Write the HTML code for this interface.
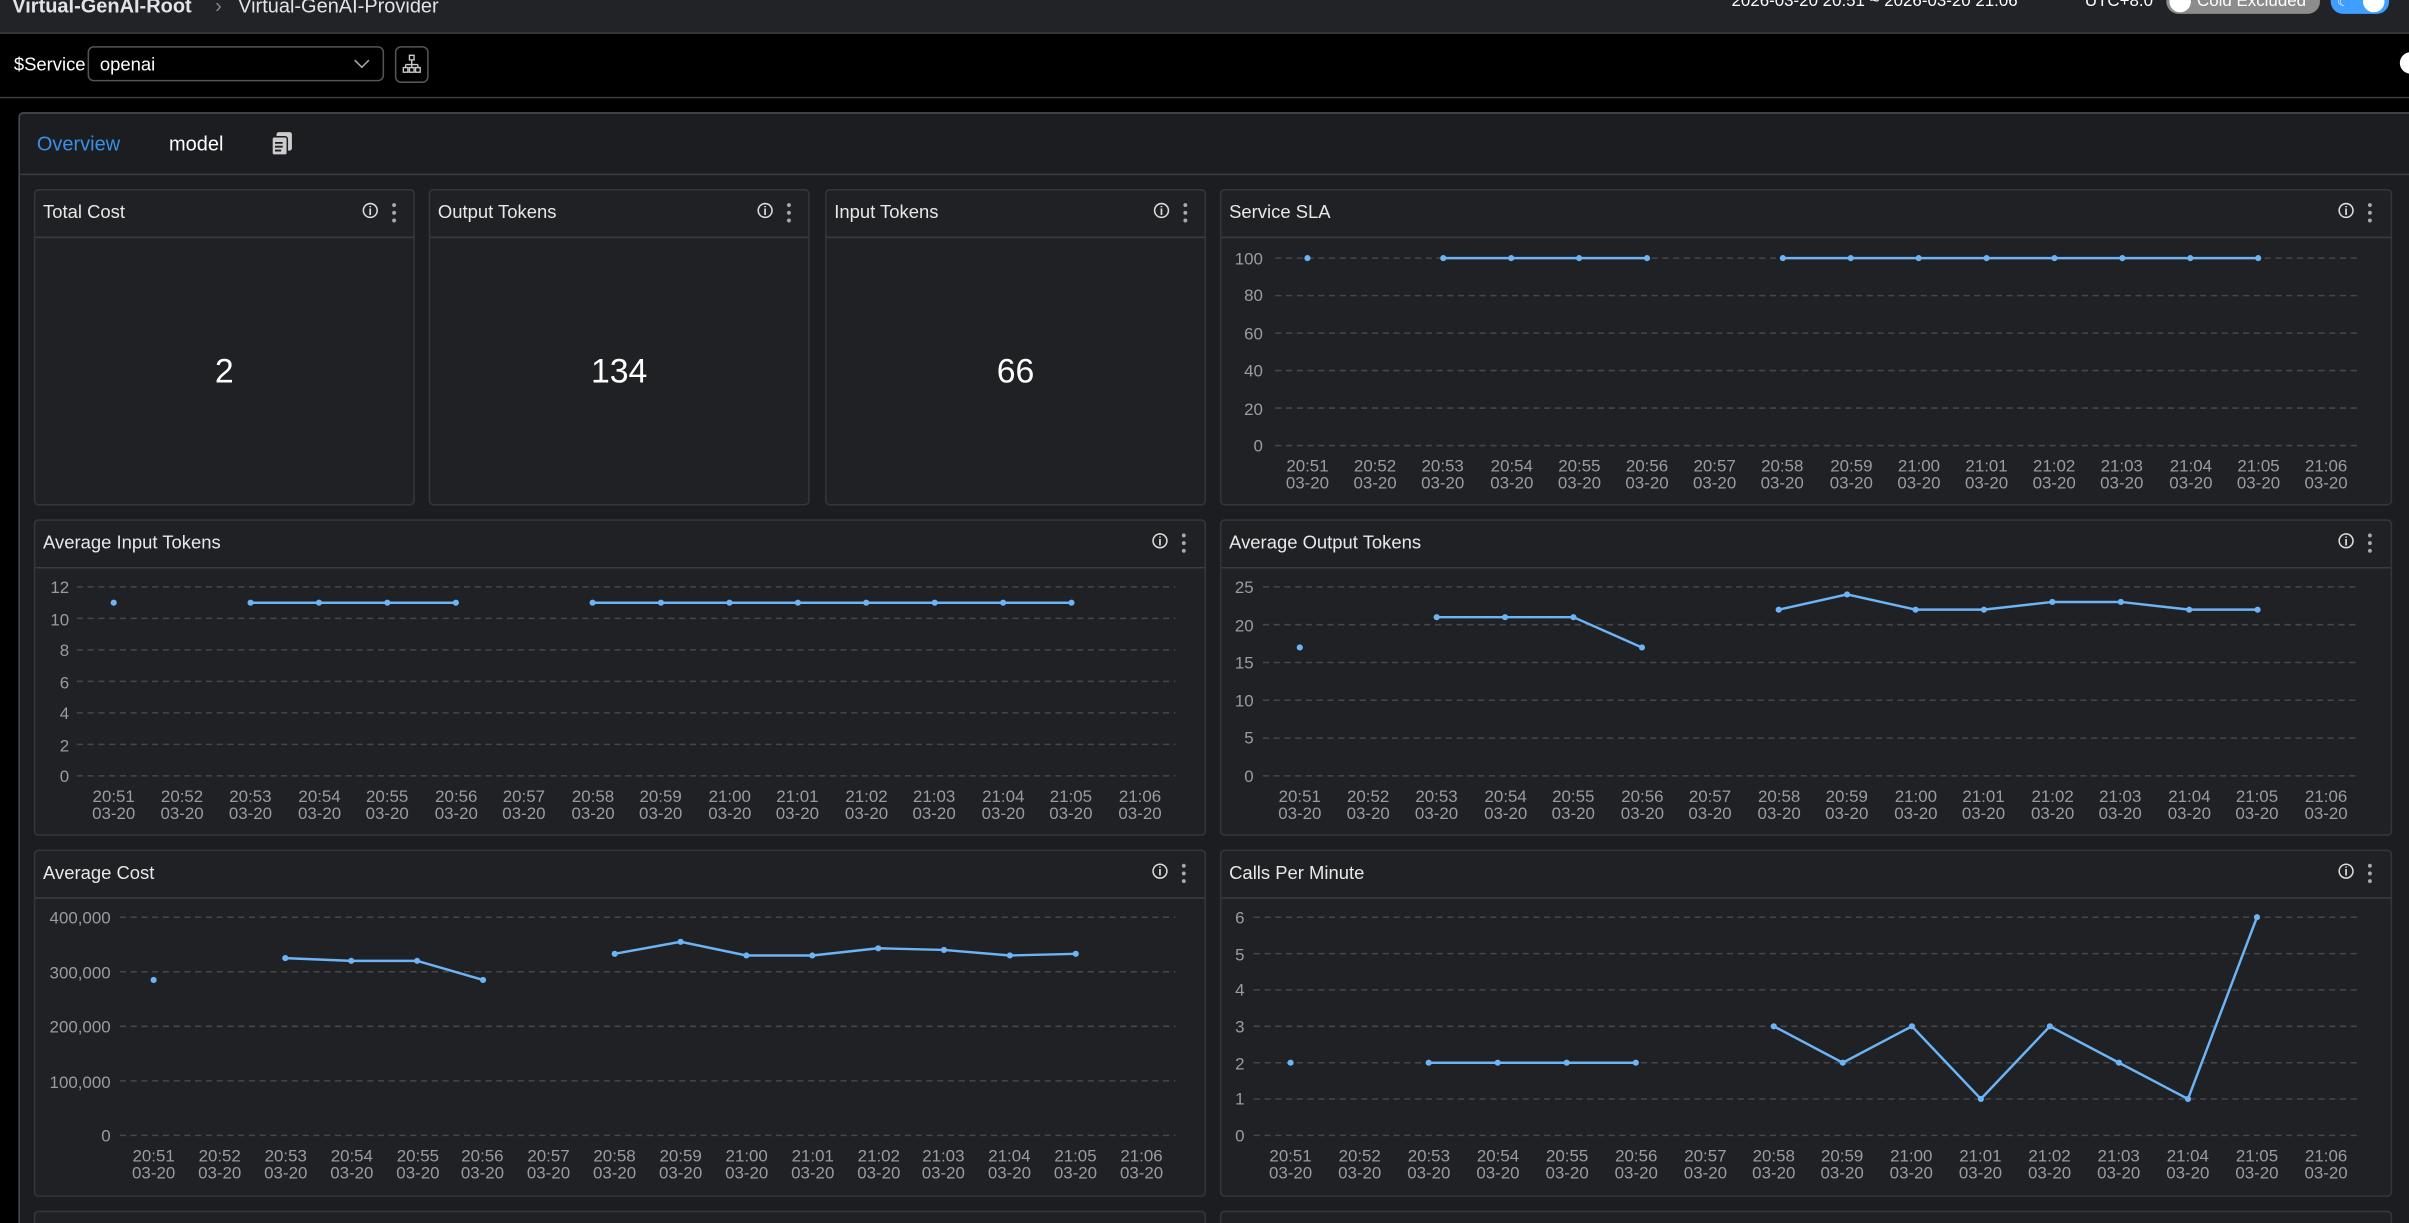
<!DOCTYPE html>
<html><head><meta charset="utf-8"><style>
html,body{margin:0;padding:0;width:2409px;height:1222px;overflow:hidden;background:#000;font-family:"Liberation Sans",sans-serif;}
#w{position:absolute;left:0;top:0;width:1568px;height:796px;transform:scale(1.5364);transform-origin:0 0;background:#000;overflow:hidden}
.a{position:absolute}
.card{position:absolute;background:#202125;border:1px solid #34363b;border-radius:3px;box-sizing:border-box}
.card .h{height:30px;border-bottom:1px solid #3a3c41;color:#e8e8e8;font-size:12px;line-height:28px;padding-left:5px;position:relative}
.ic{position:absolute;top:8px;width:10px;height:10px;border:1px solid #ddd;border-radius:50%;box-sizing:border-box;font-size:8px;line-height:9px;text-align:center;color:#ddd;font-weight:bold}
.dots{position:absolute;top:7px;width:3px;height:14px;background:radial-gradient(circle,#aaa 1.2px,transparent 1.4px) 0 0/3px 5px repeat-y}
.big{position:absolute;left:0;right:0;top:105px;text-align:center;color:#fff;font-size:22px}
svg text{font-family:"Liberation Sans",sans-serif;font-size:11px;fill:#9a9ca2}
</style></head><body><div id="w">
<div class="a" style="left:0;top:0;width:1568px;height:21px;background:#222327;border-bottom:1px solid #3b3c40"></div>
<div class="a" style="left:8px;top:-4px;font-size:13px;color:#dfe3ea;font-weight:bold">Virtual-GenAI-Root</div>
<div class="a" style="left:140px;top:-4px;font-size:13px;color:#888">›</div>
<div class="a" style="left:155px;top:-4px;font-size:13px;color:#dfe3ea">Virtual-GenAI-Provider</div>
<div class="a" style="left:1127px;top:-5px;font-size:11px;color:#fff">2026-03-20 20:51 ~ 2026-03-20 21:06</div>
<div class="a" style="left:1357px;top:-5px;font-size:11px;color:#fff">UTC+8.0</div>
<div class="a" style="left:1410px;top:-8px;width:100px;height:17px;border-radius:8px;background:#8c8c8c"></div>
<div class="a" style="left:1412px;top:-6px;width:14px;height:14px;border-radius:50%;background:#fff"></div>
<div class="a" style="left:1430px;top:-5px;font-size:11px;color:#fff">Cold Excluded</div>
<div class="a" style="left:1517px;top:-8px;width:38px;height:17px;border-radius:8px;background:#409eff"></div>
<div class="a" style="left:1538px;top:-6px;width:14px;height:14px;border-radius:50%;background:#fff"></div>
<div class="a" style="left:1521px;top:-4px;font-size:9px;color:#fff">☾</div>
<div class="a" style="left:1562px;top:34px;width:14px;height:14px;border-radius:50%;background:#fff"></div>
<div class="a" style="left:0;top:63px;width:1568px;height:1px;background:#3b3c40"></div>
<div class="a" style="left:9px;top:35px;font-size:12px;color:#fff">$Service</div>
<div class="a" style="left:57px;top:30px;width:193px;height:23px;border:1px solid #555;border-radius:4px;box-sizing:border-box"></div>
<div class="a" style="left:65px;top:35px;font-size:12px;color:#fff">openai</div>
<div class="a" style="left:232px;top:36px;width:6px;height:6px;border-right:1px solid #aaa;border-bottom:1px solid #aaa;transform:rotate(45deg)"></div>
<div class="a" style="left:257px;top:30px;width:22px;height:24px;border:1px solid #555;border-radius:4px;box-sizing:border-box"></div>
<svg class="a" style="left:262px;top:35px" width="12" height="14" viewBox="0 0 12 14"><g fill="none" stroke="#ccc" stroke-width="0.9"><rect x="4.5" y="1" width="3" height="3"/><path d="M6 4v3M2 7h8M2 7v2M6 7v2M10 7v2"/><rect x="0.5" y="9" width="3" height="3"/><rect x="4.5" y="9" width="3" height="3"/><rect x="8.5" y="9" width="3" height="3"/></g></svg>
<div class="a" style="left:12px;top:73px;width:1580px;height:740px;background:#1c1d21;border:1px solid #4a4b50;border-radius:3px"></div>
<div class="a" style="left:12px;top:113px;width:1556px;height:1px;background:#3b3c40"></div>
<div class="a" style="left:24px;top:86px;font-size:13px;color:#3a8ee6">Overview</div>
<div class="a" style="left:110px;top:86px;font-size:13px;color:#fff">model</div>
<svg class="a" style="left:176px;top:85px" width="15" height="17" viewBox="0 0 15 17"><rect x="4" y="1" width="10" height="12" rx="1.5" fill="#ccc"/><rect x="1" y="4" width="10" height="12" rx="1.5" fill="#ccc" stroke="#1c1d21" stroke-width="1"/><path d="M3 8h5M3 10.5h5M3 13h4" stroke="#1c1d21" stroke-width="1.2"/></svg>

<div class="card" style="left:22px;top:123px;width:248px;height:206px"><div class="h">Total Cost<span class="ic" style="left:213px">i</span><span class="dots" style="left:232px"></span></div><div class="big">2</div></div>
<div class="card" style="left:279px;top:123px;width:248px;height:206px"><div class="h">Output Tokens<span class="ic" style="left:213px">i</span><span class="dots" style="left:232px"></span></div><div class="big">134</div></div>
<div class="card" style="left:537px;top:123px;width:248px;height:206px"><div class="h">Input Tokens<span class="ic" style="left:213px">i</span><span class="dots" style="left:232px"></span></div><div class="big">66</div></div>
<div class="card" style="left:794px;top:123px;width:763px;height:206px"><div class="h">Service SLA<span class="ic" style="left:727px">i</span><span class="dots" style="left:746px"></span></div></div>
<div class="card" style="left:22px;top:338px;width:763px;height:206px"><div class="h">Average Input Tokens<span class="ic" style="left:727px">i</span><span class="dots" style="left:746px"></span></div></div>
<div class="card" style="left:794px;top:338px;width:763px;height:206px"><div class="h">Average Output Tokens<span class="ic" style="left:727px">i</span><span class="dots" style="left:746px"></span></div></div>
<div class="card" style="left:22px;top:553px;width:763px;height:226px"><div class="h">Average Cost<span class="ic" style="left:727px">i</span><span class="dots" style="left:746px"></span></div></div>
<div class="card" style="left:794px;top:553px;width:763px;height:226px"><div class="h">Calls Per Minute<span class="ic" style="left:727px">i</span><span class="dots" style="left:746px"></span></div></div>
<div class="card" style="left:22px;top:788px;width:763px;height:30px"></div>
<div class="card" style="left:794px;top:788px;width:763px;height:30px"></div>

<svg class="a" style="left:0;top:0" width="1568" height="796">
<g stroke="#45474c" stroke-dasharray="4 3" stroke-width="1">
<path d="M830 168H1535M830 192.4H1535M830 216.8H1535M830 241.2H1535M830 265.6H1535M830 290H1535"/>
<path d="M50 382H765M50 402.5H765M50 423H765M50 443.5H765M50 464H765M50 484.5H765M50 505H765"/>
<path d="M822 382H1535M822 406.6H1535M822 431.2H1535M822 455.8H1535M822 480.4H1535M822 505H1535"/>
<path d="M78 597H765M78 632.5H765M78 668H765M78 703.5H765M78 739H765"/>
<path d="M816 597H1535M816 620.7H1535M816 644.3H1535M816 668H1535M816 691.7H1535M816 715.3H1535M816 739H1535"/>
</g>
<g text-anchor="end">
<text x="822" y="172">100</text><text x="822" y="196">80</text><text x="822" y="221">60</text><text x="822" y="245">40</text><text x="822" y="270">20</text><text x="822" y="294">0</text>
<text x="45" y="386">12</text><text x="45" y="407">10</text><text x="45" y="427">8</text><text x="45" y="448">6</text><text x="45" y="468">4</text><text x="45" y="489">2</text><text x="45" y="509">0</text>
<text x="816" y="386">25</text><text x="816" y="411">20</text><text x="816" y="435">15</text><text x="816" y="460">10</text><text x="816" y="484">5</text><text x="816" y="509">0</text>
<text x="72" y="601">400,000</text><text x="72" y="637">300,000</text><text x="72" y="672">200,000</text><text x="72" y="708">100,000</text><text x="72" y="743">0</text>
<text x="810" y="601">6</text><text x="810" y="625">5</text><text x="810" y="648">4</text><text x="810" y="672">3</text><text x="810" y="696">2</text><text x="810" y="719">1</text><text x="810" y="743">0</text>
</g>
<g text-anchor="middle">
<g id="sl"><text x="851" y="307">20:51</text><text x="895" y="307">20:52</text><text x="939" y="307">20:53</text><text x="984" y="307">20:54</text><text x="1028" y="307">20:55</text><text x="1072" y="307">20:56</text><text x="1116" y="307">20:57</text><text x="1160" y="307">20:58</text><text x="1205" y="307">20:59</text><text x="1249" y="307">21:00</text><text x="1293" y="307">21:01</text><text x="1337" y="307">21:02</text><text x="1381" y="307">21:03</text><text x="1426" y="307">21:04</text><text x="1470" y="307">21:05</text><text x="1514" y="307">21:06</text>
<text x="851" y="318">03-20</text><text x="895" y="318">03-20</text><text x="939" y="318">03-20</text><text x="984" y="318">03-20</text><text x="1028" y="318">03-20</text><text x="1072" y="318">03-20</text><text x="1116" y="318">03-20</text><text x="1160" y="318">03-20</text><text x="1205" y="318">03-20</text><text x="1249" y="318">03-20</text><text x="1293" y="318">03-20</text><text x="1337" y="318">03-20</text><text x="1381" y="318">03-20</text><text x="1426" y="318">03-20</text><text x="1470" y="318">03-20</text><text x="1514" y="318">03-20</text></g>
<text x="74" y="522">20:51</text><text x="118.5" y="522">20:52</text><text x="163" y="522">20:53</text><text x="208" y="522">20:54</text><text x="252" y="522">20:55</text><text x="297" y="522">20:56</text><text x="341" y="522">20:57</text><text x="386" y="522">20:58</text><text x="430" y="522">20:59</text><text x="475" y="522">21:00</text><text x="519" y="522">21:01</text><text x="564" y="522">21:02</text><text x="608" y="522">21:03</text><text x="653" y="522">21:04</text><text x="697" y="522">21:05</text><text x="742" y="522">21:06</text>
<text x="74" y="533">03-20</text><text x="118.5" y="533">03-20</text><text x="163" y="533">03-20</text><text x="208" y="533">03-20</text><text x="252" y="533">03-20</text><text x="297" y="533">03-20</text><text x="341" y="533">03-20</text><text x="386" y="533">03-20</text><text x="430" y="533">03-20</text><text x="475" y="533">03-20</text><text x="519" y="533">03-20</text><text x="564" y="533">03-20</text><text x="608" y="533">03-20</text><text x="653" y="533">03-20</text><text x="697" y="533">03-20</text><text x="742" y="533">03-20</text>
<text x="846" y="522">20:51</text><text x="890.5" y="522">20:52</text><text x="935" y="522">20:53</text><text x="980" y="522">20:54</text><text x="1024" y="522">20:55</text><text x="1069" y="522">20:56</text><text x="1113" y="522">20:57</text><text x="1158" y="522">20:58</text><text x="1202" y="522">20:59</text><text x="1247" y="522">21:00</text><text x="1291" y="522">21:01</text><text x="1336" y="522">21:02</text><text x="1380" y="522">21:03</text><text x="1425" y="522">21:04</text><text x="1469" y="522">21:05</text><text x="1514" y="522">21:06</text>
<text x="846" y="533">03-20</text><text x="890.5" y="533">03-20</text><text x="935" y="533">03-20</text><text x="980" y="533">03-20</text><text x="1024" y="533">03-20</text><text x="1069" y="533">03-20</text><text x="1113" y="533">03-20</text><text x="1158" y="533">03-20</text><text x="1202" y="533">03-20</text><text x="1247" y="533">03-20</text><text x="1291" y="533">03-20</text><text x="1336" y="533">03-20</text><text x="1380" y="533">03-20</text><text x="1425" y="533">03-20</text><text x="1469" y="533">03-20</text><text x="1514" y="533">03-20</text>
<text x="100" y="756">20:51</text><text x="143" y="756">20:52</text><text x="186" y="756">20:53</text><text x="229" y="756">20:54</text><text x="272" y="756">20:55</text><text x="314" y="756">20:56</text><text x="357" y="756">20:57</text><text x="400" y="756">20:58</text><text x="443" y="756">20:59</text><text x="486" y="756">21:00</text><text x="529" y="756">21:01</text><text x="572" y="756">21:02</text><text x="614" y="756">21:03</text><text x="657" y="756">21:04</text><text x="700" y="756">21:05</text><text x="743" y="756">21:06</text>
<text x="100" y="767">03-20</text><text x="143" y="767">03-20</text><text x="186" y="767">03-20</text><text x="229" y="767">03-20</text><text x="272" y="767">03-20</text><text x="314" y="767">03-20</text><text x="357" y="767">03-20</text><text x="400" y="767">03-20</text><text x="443" y="767">03-20</text><text x="486" y="767">03-20</text><text x="529" y="767">03-20</text><text x="572" y="767">03-20</text><text x="614" y="767">03-20</text><text x="657" y="767">03-20</text><text x="700" y="767">03-20</text><text x="743" y="767">03-20</text>
<text x="840" y="756">20:51</text><text x="885" y="756">20:52</text><text x="930" y="756">20:53</text><text x="975" y="756">20:54</text><text x="1020" y="756">20:55</text><text x="1065" y="756">20:56</text><text x="1110" y="756">20:57</text><text x="1154.5" y="756">20:58</text><text x="1199" y="756">20:59</text><text x="1244" y="756">21:00</text><text x="1289" y="756">21:01</text><text x="1334" y="756">21:02</text><text x="1379" y="756">21:03</text><text x="1424" y="756">21:04</text><text x="1469" y="756">21:05</text><text x="1514" y="756">21:06</text>
<text x="840" y="767">03-20</text><text x="885" y="767">03-20</text><text x="930" y="767">03-20</text><text x="975" y="767">03-20</text><text x="1020" y="767">03-20</text><text x="1065" y="767">03-20</text><text x="1110" y="767">03-20</text><text x="1154.5" y="767">03-20</text><text x="1199" y="767">03-20</text><text x="1244" y="767">03-20</text><text x="1289" y="767">03-20</text><text x="1334" y="767">03-20</text><text x="1379" y="767">03-20</text><text x="1424" y="767">03-20</text><text x="1469" y="767">03-20</text><text x="1514" y="767">03-20</text>
</g>
<g fill="none" stroke="#6cb4f5" stroke-width="1.6">
<path d="M939.4 168H1072M1160.4 168H1469.8"/>
<path d="M163.1 392.3H296.7M385.7 392.3H697.4"/>
<path d="M935.1 401.7L979.6 401.7L1024.1 401.7L1068.7 421.4M1157.7 396.8L1202.2 386.9L1246.8 396.8L1291.3 396.8L1335.8 391.8L1380.4 391.8L1424.9 396.8L1469.4 396.8"/>
<path d="M185.7 623.6L228.6 625.4L271.5 625.4L314.4 637.8M400.1 620.8L443 613L485.8 621.9L528.7 621.9L571.6 617.2L614.4 618.3L657.3 621.9L700.2 620.8"/>
<path d="M929.9 691.7L1064.7 691.7M1154.5 668L1199.4 691.7L1244.4 668L1289.3 715.3L1334.2 668L1379.2 691.7L1424.1 715.3L1469 597"/>
</g>
<g fill="#6cb4f5">
<circle cx="851" cy="168" r="2"/><circle cx="939.4" cy="168" r="2"/><circle cx="983.6" cy="168" r="2"/><circle cx="1027.8" cy="168" r="2"/><circle cx="1072" cy="168" r="2"/><circle cx="1160.4" cy="168" r="2"/><circle cx="1204.6" cy="168" r="2"/><circle cx="1248.8" cy="168" r="2"/><circle cx="1293" cy="168" r="2"/><circle cx="1337.2" cy="168" r="2"/><circle cx="1381.4" cy="168" r="2"/><circle cx="1425.6" cy="168" r="2"/><circle cx="1469.8" cy="168" r="2"/>
<circle cx="74" cy="392.3" r="2"/><circle cx="163.1" cy="392.3" r="2"/><circle cx="207.6" cy="392.3" r="2"/><circle cx="252.1" cy="392.3" r="2"/><circle cx="296.7" cy="392.3" r="2"/><circle cx="385.7" cy="392.3" r="2"/><circle cx="430.2" cy="392.3" r="2"/><circle cx="474.8" cy="392.3" r="2"/><circle cx="519.3" cy="392.3" r="2"/><circle cx="563.8" cy="392.3" r="2"/><circle cx="608.4" cy="392.3" r="2"/><circle cx="652.9" cy="392.3" r="2"/><circle cx="697.4" cy="392.3" r="2"/>
<circle cx="846" cy="421.4" r="2"/><circle cx="935.1" cy="401.7" r="2"/><circle cx="979.6" cy="401.7" r="2"/><circle cx="1024.1" cy="401.7" r="2"/><circle cx="1068.7" cy="421.4" r="2"/><circle cx="1157.7" cy="396.8" r="2"/><circle cx="1202.2" cy="386.9" r="2"/><circle cx="1246.8" cy="396.8" r="2"/><circle cx="1291.3" cy="396.8" r="2"/><circle cx="1335.8" cy="391.8" r="2"/><circle cx="1380.4" cy="391.8" r="2"/><circle cx="1424.9" cy="396.8" r="2"/><circle cx="1469.4" cy="396.8" r="2"/>
<circle cx="100" cy="637.8" r="2"/><circle cx="185.7" cy="623.6" r="2"/><circle cx="228.6" cy="625.4" r="2"/><circle cx="271.5" cy="625.4" r="2"/><circle cx="314.4" cy="637.8" r="2"/><circle cx="400.1" cy="620.8" r="2"/><circle cx="443" cy="613" r="2"/><circle cx="485.8" cy="621.9" r="2"/><circle cx="528.7" cy="621.9" r="2"/><circle cx="571.6" cy="617.2" r="2"/><circle cx="614.4" cy="618.3" r="2"/><circle cx="657.3" cy="621.9" r="2"/><circle cx="700.2" cy="620.8" r="2"/>
<circle cx="840" cy="691.7" r="2"/><circle cx="929.9" cy="691.7" r="2"/><circle cx="974.8" cy="691.7" r="2"/><circle cx="1019.7" cy="691.7" r="2"/><circle cx="1064.7" cy="691.7" r="2"/><circle cx="1154.5" cy="668" r="2"/><circle cx="1199.4" cy="691.7" r="2"/><circle cx="1244.4" cy="668" r="2"/><circle cx="1289.3" cy="715.3" r="2"/><circle cx="1334.2" cy="668" r="2"/><circle cx="1379.2" cy="691.7" r="2"/><circle cx="1424.1" cy="715.3" r="2"/><circle cx="1469" cy="597" r="2"/>
</g>
</svg>
</div></body></html>
